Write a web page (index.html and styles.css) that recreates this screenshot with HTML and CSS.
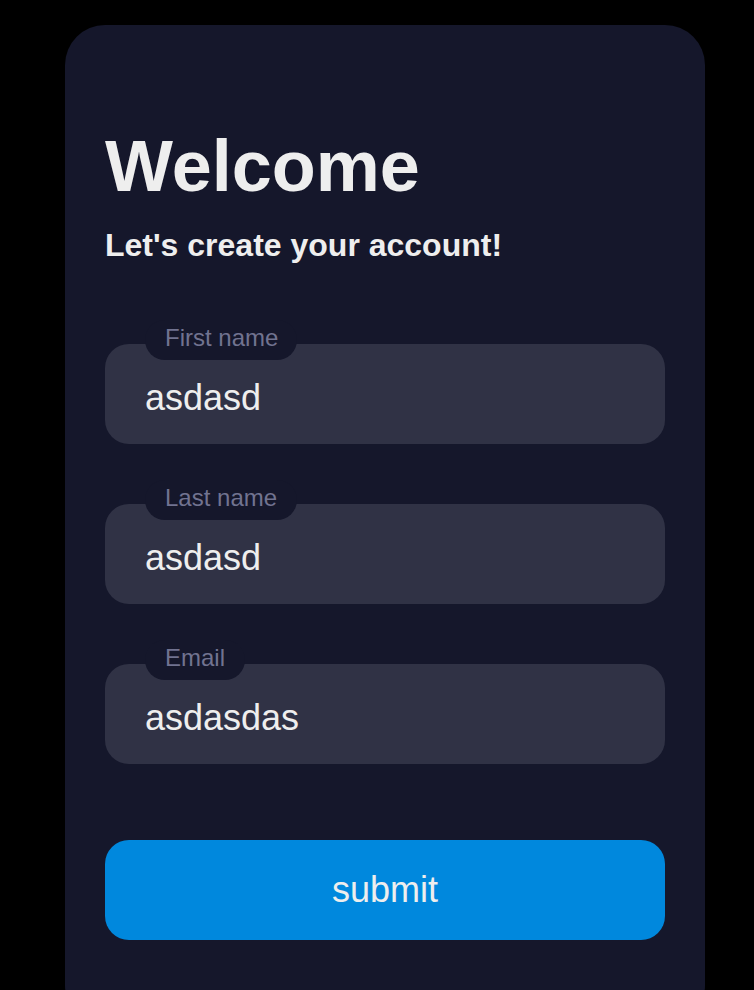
FILE: index.html
```html
<!DOCTYPE html>
<html lang="en">
<head>
<meta charset="utf-8">
<title>Welcome</title>
<link rel="stylesheet" href="styles.css">
</head>
<body>
<form class="form">
  <div class="title">Welcome</div>
  <div class="subtitle">Let's create your account!</div>
  <div class="input-container ic1">
    <input class="input" type="text" value="asdasd" placeholder=" ">
    <div class="cut"></div>
    <label class="placeholder">First name</label>
  </div>
  <div class="input-container ic2">
    <input class="input" type="text" value="asdasd" placeholder=" ">
    <div class="cut"></div>
    <label class="placeholder">Last name</label>
  </div>
  <div class="input-container ic2">
    <input class="input" type="text" value="asdasdas" placeholder=" ">
    <div class="cut cut-short"></div>
    <label class="placeholder">Email</label>
  </div>
  <button type="button" class="submit">submit</button>
</form>
</body>
</html>
```
FILE: styles.css
```css
html, body {
  margin: 0;
  padding: 0;
  background: #000;
  height: 100%;
  overflow: hidden;
}
body {
  font-family: "Liberation Sans", Arial, sans-serif;
  padding: 25px 0 0 65px;
  box-sizing: border-box;
}
.form {
  background-color: #15172b;
  border-radius: 40px;
  box-sizing: border-box;
  height: 1000px;
  padding: 40px;
  width: 640px;
}
.title {
  color: #eee;
  font-size: 72px;
  font-weight: 700;
  margin-top: 60px;
}
.subtitle {
  color: #eee;
  font-size: 32px;
  font-weight: 700;
  margin-top: 20px;
}
.input-container {
  height: 100px;
  position: relative;
  width: 100%;
}
.ic1 { margin-top: 80px; }
.ic2 { margin-top: 60px; }
.input {
  background-color: #303245;
  border-radius: 24px;
  border: 0;
  box-sizing: border-box;
  color: #eee;
  font-family: "Liberation Sans", Arial, sans-serif;
  font-size: 36px;
  height: 100%;
  outline: 0;
  padding: 8px 40px 0;
  width: 100%;
  display: block;
}
.cut {
  background-color: #15172b;
  border-radius: 20px;
  height: 40px;
  left: 40px;
  position: absolute;
  top: -24px;
  width: 152px;
}
.cut-short { width: 100px; }
.placeholder {
  color: #717390;
  font-size: 32px;
  left: 40px;
  line-height: 28px;
  position: absolute;
  top: 40px;
  transform-origin: 0 50%;
  transform: translateY(-60px) translateX(20px) scale(0.75);
  white-space: nowrap;
}
.submit {
  background-color: #08d;
  border-radius: 24px;
  border: 0;
  box-sizing: border-box;
  color: #eee;
  font-family: "Liberation Sans", Arial, sans-serif;
  font-size: 36px;
  height: 100px;
  margin-top: 76px;
  text-align: center;
  width: 100%;
  display: block;
}
```
